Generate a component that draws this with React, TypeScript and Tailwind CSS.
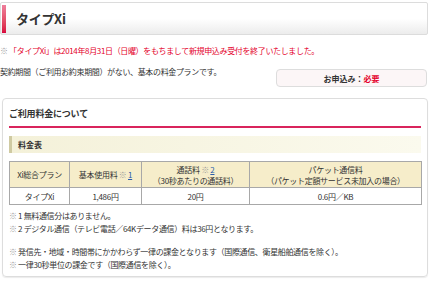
import React from 'react';

const notes = [
  { mark: '※ 1', text: '無料通信分はありません。' },
  { mark: '※ 2', text: 'デジタル通信（テレビ電話／64Kデータ通信）料は36円となります。' },
];

export default function App() {
  return (
    <div className="w-[430px] h-[286px] overflow-hidden bg-white text-[#333] font-['Noto_Sans_CJK_JP',sans-serif] text-[8px] leading-[13px]">
      {/* page title */}
      <div className="mt-[2px] mr-[2px] h-[33px] flex items-center border border-[#dcdcdc] rounded-[2px] bg-gradient-to-b from-white via-white to-[#ececec]">
        <div className="ml-[1px] w-[4px] h-[28px] bg-gradient-to-b from-[#ee7f9c] to-[#d8003e]" />
        <h1 className="ml-[10px] text-[13px] font-bold tracking-[-0.3px] text-[#333]">タイプXi</h1>
      </div>

      <p className="mt-[9px] tracking-[-0.35px]">
        <span className="text-[#999]">※ </span>
        <span className="text-[#e4002b]">「タイプXi」は2014年8月31日（日曜）をもちまして新規申込み受付を終了いたしました。</span>
      </p>

      <div className="mt-[8px] flex items-start justify-between">
        <p className="tracking-[-0.35px]">契約期間（ご利用お約束期間）がない、基本の料金プランです。</p>
        <div className="mt-[4px] mr-[3px] w-[151px] h-[18px] flex items-center justify-center rounded-[4px] border border-[#ddd] bg-[#fcf6f7] font-bold">
          お申込み：<span className="text-[#e4002b]">必要</span>
        </div>
      </div>

      {/* charges panel */}
      <section className="mt-[11px] ml-[2px] mr-[2px] h-[179px] rounded-[4px] border border-[#ddd] shadow-[0_1px_1px_rgba(0,0,0,0.08)] px-[6px]">
        <h2 className="mt-[8px] text-[9px] leading-[13px] font-bold tracking-[-0.2px]">ご利用料金について</h2>
        <div className="mt-[6px] h-[2px] bg-[#d9245c]" />

        <div className="mt-[8px] h-[17px] flex items-center border-l-[3px] border-[#cfcaa2] bg-gradient-to-r from-[#f4f1d9] to-[#fbfaee] pl-[6px] font-bold">
          料金表
        </div>

        <table className="mt-[8px] w-[413px] border-collapse text-center tracking-[-0.3px]">
          <thead>
            <tr className="bg-[#f6edca] h-[26px]">
              <th className="w-[60px] border border-[#a8a8a8] font-normal">Xi総合プラン</th>
              <th className="w-[72px] border border-[#a8a8a8] font-normal">
                基本使用料 <span className="text-[#999]">※</span> <span className="text-[#2a5caa] underline">1</span>
              </th>
              <th className="w-[108px] border border-[#a8a8a8] font-normal leading-[11px]">
                通話料 <span className="text-[#999]">※</span> <span className="text-[#2a5caa] underline">2</span>
                <br />（30秒あたりの通話料）
              </th>
              <th className="border border-[#a8a8a8] font-normal leading-[11px]">
                パケット通信料
                <br />（パケット定額サービス未加入の場合）
              </th>
            </tr>
          </thead>
          <tbody>
            <tr className="h-[17px]">
              <td className="border border-[#a8a8a8]">タイプXi</td>
              <td className="border border-[#a8a8a8]">1,486円</td>
              <td className="border border-[#a8a8a8]">20円</td>
              <td className="border border-[#a8a8a8]">0.6円／KB</td>
            </tr>
          </tbody>
        </table>

        <ul className="mt-[4px] tracking-[-0.35px]">
          {notes.map((n) => (
            <li key={n.mark}>
              <span className="text-[#999]">※</span> {n.mark.slice(2)} {n.text}
            </li>
          ))}
        </ul>
        <ul className="mt-[10px] tracking-[-0.35px]">
          <li>
            <span className="text-[#999]">※</span> 発信先・地域・時間帯にかかわらず一律の課金となります（国際通信、衛星船舶通信を除く）。
          </li>
          <li>
            <span className="text-[#999]">※</span> 一律30秒単位の課金です（国際通信を除く）。
          </li>
        </ul>
      </section>
    </div>
  );
}
